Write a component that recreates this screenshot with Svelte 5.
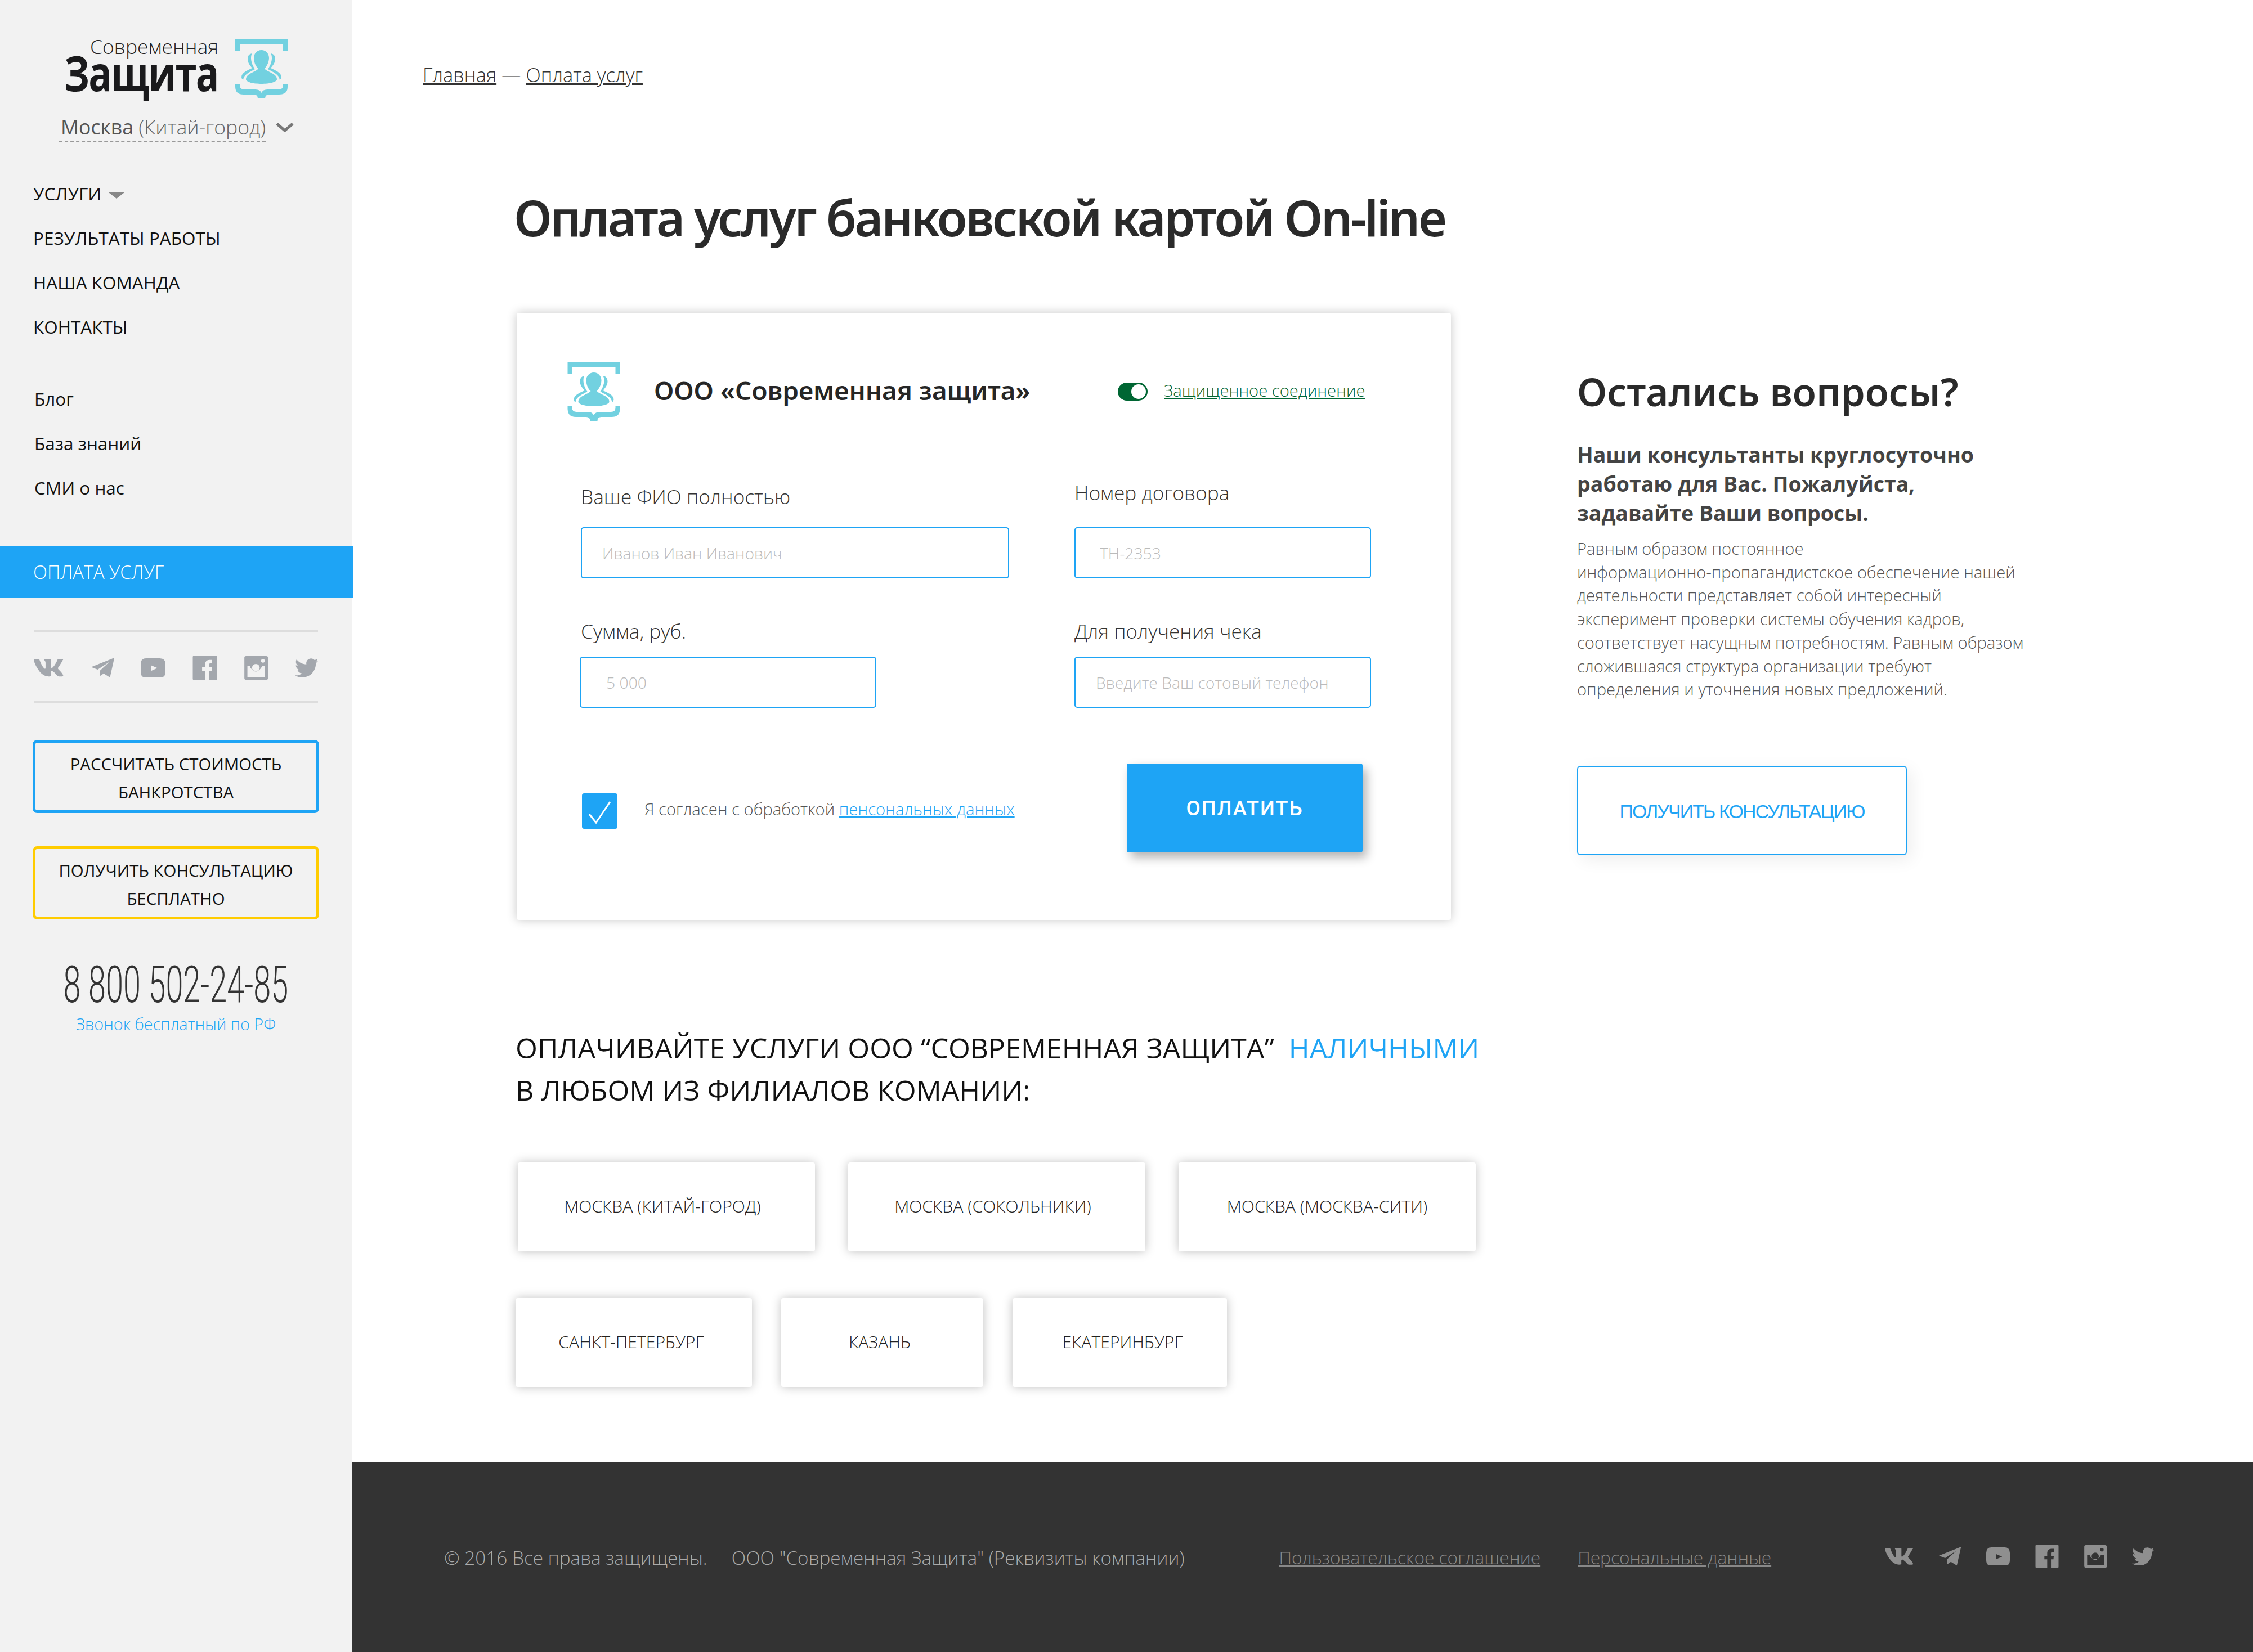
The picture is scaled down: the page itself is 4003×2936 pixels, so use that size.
<script>
    const socials = [
        { name: 'vk', box: '9 96 558 320', d: 'M545 117.7c3.7-12.5 0-21.7-17.8-21.7h-58.9c-15 0-21.9 7.9-25.6 16.7 0 0-32.1 78.9-77.5 130.1-14.7 14.8-21.4 19.5-29.4 19.5-4 0-9.8-4.7-9.8-17.2V117.7c0-15-4.5-21.7-16.9-21.7h-92.6c-9.4 0-15 7-15 13.5 0 14.2 21.2 17.5 23.4 57.4v86.8c0 19-3.4 22.5-10.9 22.5-20 0-68.6-73.4-97.4-157.4-5.8-16.3-11.5-22.9-26.6-22.9H30.1C13 96 9.7 103.9 9.7 112.7c0 15.6 20 93.1 93.1 195.5C151.5 378.1 220.1 416 282.5 416c37.5 0 42.1-8.4 42.1-22.9 0-66.8-3.4-73.1 15.4-73.1 8.7 0 23.7 4.4 58.7 38.1 40 40 46.6 57.9 69 57.9h58.9c16.8 0 25.3-8.4 20.4-25-11.2-34.9-86.9-106.7-90.3-111.5-8.7-11.2-6.2-16.2 0-26.2.1-.1 72-101.3 79.4-135.6z' },
        { name: 'tg', box: '0 0 114 100', d: 'M0 46L111 1Q114 0 114 3L93 97L62 78L42 91L44 63L90 20L32 58Z' },
        { name: 'yt', box: '0 0 122 95', d: 'M28 0H94Q122 0 122 28V67Q122 95 94 95H28Q0 95 0 67V28Q0 0 28 0ZM50 34V62L82 48Z' },
        { name: 'fb', box: '0 0 122 125', d: 'M8 0H114Q122 0 122 8V117Q122 125 114 125H82V78H95L97 60H82V46C82 42 84 40 88 40H97V22H84C72 22 62 30 62 46V60H47V78H62V125H8Q0 125 0 117V8Q0 0 8 0Z' },
        { name: 'ig', box: '0 0 117 118', d: 'M8 0H109Q117 0 117 8V110Q117 118 109 118H8Q0 118 0 110V8Q0 0 8 0ZM15 50H27A31 31 0 0 0 87 50H102V105H15ZM38 58a19 19 0 1 0 38 0a19 19 0 1 0 -38 0ZM83 24a9 9 0 1 0 18 0a9 9 0 1 0 -18 0Z' },
        { name: 'tw', box: '0 48 512 416', d: 'M459.37 151.716c.325 4.548.325 9.097.325 13.645 0 138.72-105.583 298.558-298.558 298.558-59.452 0-114.68-17.219-161.137-47.106 8.447.974 16.568 1.299 25.34 1.299 49.055 0 94.213-16.568 130.274-44.832-46.132-.975-84.792-31.188-98.112-72.772 6.498.974 12.995 1.624 19.818 1.624 9.421 0 18.843-1.3 27.614-3.573-48.081-9.747-84.143-51.98-84.143-102.985v-1.299c13.969 7.797 30.214 12.67 47.431 13.319-28.264-18.843-46.781-51.005-46.781-87.391 0-19.492 5.197-37.36 14.294-52.954 51.655 63.675 129.3 105.258 216.365 109.807-1.624-7.797-2.599-15.918-2.599-24.04 0-57.828 46.782-104.934 104.934-104.934 30.213 0 57.502 12.67 76.67 33.137 23.715-4.548 46.456-13.32 66.599-25.34-7.798 24.366-24.366 44.833-46.132 57.827 21.117-2.273 41.584-8.122 60.426-16.243-14.292 20.791-32.161 39.308-52.628 54.253z' }
    ];

    const mainNav = ['Результаты работы', 'Наша команда', 'Контакты'];
    const subNav = ['Блог', 'База знаний', 'СМИ о нас'];
    const branchRows = [
        [
            { name: 'Москва (Китай-город)', cls: 'b1 left' },
            { name: 'Москва (Сокольники)', cls: 'b1 left' },
            { name: 'Москва (Москва-Сити)', cls: 'b1' }
        ],
        [
            { name: 'Санкт-Петербург', cls: 'b2 left-s' },
            { name: 'Казань', cls: 'b3 left-s' },
            { name: 'Екатеринбург', cls: 'b4 right-s' }
        ]
    ];
</script>

{#snippet logoMark(cls)}
    <svg class={cls} viewBox="0 0 93 105">
        <path d="M0 0H93V21H85V9H8V21H0Z" />
        <path d="M0 79H8V82Q8 89 16 89H36Q44 89 46.5 95Q49 89 57 89H77Q85 89 85 82V79H93V84Q93 98 78 98H60Q53 98 53 105H40Q40 98 33 98H15Q0 98 0 84Z" />
        <path d="M46.5 19C55 19 60 26 60 33C60 42 54 50 52 52C56 58 74 60 74 71C74 76 60 79 46.5 79C33 79 19 76 19 71C19 60 37 58 41 52C38 50 33 42 33 33C33 26 38 19 46.5 19Z" />
        <path d="M30 25C24 26 22 30 22 35C22 42 27 47 30 51C22 55 11 59 11 67Q11 70 14 72C15 62 26 58 35 53C31 47 28 40 28 33Q28 28 30 25Z" />
        <path transform="translate(93 0) scale(-1 1)" d="M30 25C24 26 22 30 22 35C22 42 27 47 30 51C22 55 11 59 11 67Q11 70 14 72C15 62 26 58 35 53C31 47 28 40 28 33Q28 28 30 25Z" />
    </svg>
{/snippet}

{#snippet socialIcons()}
    {#each socials as s}
        <svg class="soc {s.name}" viewBox={s.box}><path d={s.d} fill-rule="evenodd" /></svg>
    {/each}
{/snippet}

<div class="page">
    <aside class="sidebar">
        <div class="brand">
            <div class="brand-text">
                <div class="brand-small">Современная</div>
                <div class="brand-big"><span>Защита</span></div>
            </div>
            {@render logoMark('brand-mark')}
        </div>
        <div class="city">
            <span class="city-name"><b>Москва</b> (Китай-город)</span>
            <svg class="chev" viewBox="0 0 32 18"><path d="M2 3L16 15L30 3" /></svg>
        </div>

        <ul class="nav">
            <li>Услуги <i class="caret"></i></li>
            {#each mainNav as item}
                <li>{item}</li>
            {/each}
        </ul>
        <ul class="subnav">
            {#each subNav as item}
                <li>{item}</li>
            {/each}
        </ul>

        <div class="pay-link">Оплата услуг</div>

        <div class="side-socials">{@render socialIcons()}</div>

        <div class="side-btn blue">Рассчитать стоимость<br />банкротства</div>
        <div class="side-btn yellow">Получить консультацию<br />бесплатно</div>

        <div class="phone"><span>8 800 502-24-85</span></div>
        <div class="phone-note">Звонок бесплатный по РФ</div>
    </aside>

    <main class="content">
        <div class="crumbs"><a href="#top">Главная</a> — <a href="#top">Оплата услуг</a></div>
        <h1>Оплата услуг банковской картой On-line</h1>

        <div class="columns">
            <section class="card">
                <header class="card-head">
                    {@render logoMark('card-mark')}
                    <div class="company">ООО «Современная защита»</div>
                    <i class="toggle"></i>
                    <a class="secure" href="#top">Защищенное соединение</a>
                </header>

                <div class="fields">
                    <div class="field first">
                        <div class="label">Ваше ФИО полностью</div>
                        <input class="wide" placeholder="Иванов Иван Иванович" />
                    </div>
                    <div class="field first">
                        <div class="label raised">Номер договора</div>
                        <input class="ph-contract" placeholder="ТН-2353" />
                    </div>
                    <div class="field second">
                        <div class="label">Сумма, руб.</div>
                        <input class="sum" placeholder="5 000" />
                    </div>
                    <div class="field second">
                        <div class="label">Для получения чека</div>
                        <input placeholder="Введите Ваш сотовый телефон" />
                    </div>
                </div>

                <div class="card-foot">
                    <span class="check">
                        <svg viewBox="0 0 63 63"><polyline points="13,37 25,52 50,15" /></svg>
                    </span>
                    <span class="agree">Я согласен с обработкой <a href="#top">пенсональных данных</a></span>
                    <button class="pay">Оплатить</button>
                </div>
            </section>

            <section class="questions">
                <h2>Остались вопросы?</h2>
                <p class="lead">Наши консультанты круглосуточно работаю для Вас. Пожалуйста, задавайте Ваши вопросы.</p>
                <p class="body">Равным образом постоянное<br />информационно-пропагандистское обеспечение нашей деятельности представляет собой интересный эксперимент проверки системы обучения кадров, соответствует насущным потребностям. Равным образом сложившаяся структура организации требуют определения и уточнения новых предложений.</p>
                <button class="consult">Получить консультацию</button>
            </section>
        </div>

        <h3 class="cash">Оплачивайте услуги ООО “Современная защита”&nbsp; <em>наличными</em><br />в любом из филиалов комании:</h3>

        {#each branchRows as row, i}
            <div class="branches" class:second-row={i === 1}>
                {#each row as b}
                    <div class="branch {b.cls}">{b.name}</div>
                {/each}
            </div>
        {/each}

        <footer class="footer">
            <span class="copy">© 2016 Все права защищены.</span>
            <span class="copy org">ООО "Современная Защита" (Реквизиты компании)</span>
            <a class="f-link agreement" href="#top">Пользовательское соглашение</a>
            <a class="f-link personal" href="#top">Персональные данные</a>
            <div class="foot-socials">{@render socialIcons()}</div>
        </footer>
    </main>
</div>

<style>
    :global(body) {
        margin: 0;
        background: #fff;
    }

    .page {
        display: flex;
        width: 4003px;
        height: 2936px;
        overflow: hidden;
        font-family: 'Open Sans', sans-serif;
        color: #222;
    }

    /* sidebar */
    .sidebar {
        width: 625px;
        flex: none;
        background: #f2f2f2;
    }

    .brand {
        display: flex;
        align-items: flex-start;
        padding: 70px 0 0 114px;
        gap: 30px;
    }

    .brand-text {
        width: 274px;
        text-align: right;
    }

    .brand-small {
        font-weight: 300;
        font-size: 35.5px;
        line-height: 30px;
        margin-top: -3px;
        color: #222;
    }

    .brand-big {
        display: flex;
        justify-content: flex-end;
        font-weight: 700;
        font-size: 86px;
        line-height: 63px;
        letter-spacing: -2px;
        color: #1a1a1c;
        white-space: nowrap;
    }

    .brand-big span {
        flex: none;
        transform: scaleX(0.8);
        transform-origin: right center;
    }

    :global(.brand-mark) {
        width: 93px;
        height: 105px;
        fill: #72d1e0;
        flex: none;
    }

    .city {
        display: flex;
        align-items: center;
        margin: 24px 0 0 105px;
    }

    .city-name {
        padding-left: 3px;
        font-weight: 300;
        font-size: 35.6px;
        line-height: 52px;
        color: #666;
        border-bottom: 2px dashed #999;
    }

    .city-name b {
        font-weight: 400;
        color: #555;
    }

    .chev {
        width: 32px;
        height: 18px;
        margin-left: 18px;
        fill: none;
        stroke: #777;
        stroke-width: 5;
    }

    .nav,
    .subnav {
        list-style: none;
        margin: 0;
        color: #111;
    }

    .nav {
        padding: 0 0 0 59px;
        margin-top: 51px;
        font-size: 31.5px;
        line-height: 79px;
        text-transform: uppercase;
    }

    .caret {
        display: inline-block;
        margin-left: 5px;
        vertical-align: middle;
        border-top: 11px solid #888;
        border-left: 14px solid transparent;
        border-right: 14px solid transparent;
    }

    .subnav {
        padding: 0 0 0 61px;
        margin-top: 49px;
        font-size: 31.5px;
        line-height: 79px;
    }

    .pay-link {
        width: 568px;
        margin-top: 65px;
        padding-left: 59px;
        background: #1ea4f5;
        color: #fff;
        font-weight: 300;
        font-size: 32.6px;
        line-height: 92px;
        text-transform: uppercase;
    }

    .side-socials {
        display: flex;
        justify-content: space-between;
        align-items: center;
        width: 505px;
        height: 118px;
        padding-top: 5px;
        margin: 57px 0 0 60px;
        border-top: 3px solid #ddd;
        border-bottom: 3px solid #ddd;
        font-size: 44px;
        fill: #a3a7ad;
    }

    .soc {
        display: block;
        flex: none;
    }

    .soc.vk { width: 1.23em; height: 0.71em; }
    .soc.tg { width: 0.93em; height: 0.82em; }
    .soc.yt { width: 1em; height: 0.78em; }
    .soc.fb { width: 1em; height: 1em; }
    .soc.ig { width: 0.96em; height: 0.96em; }
    .soc.tw { width: 0.94em; height: 0.78em; }

    .side-btn {
        width: 499px;
        margin: 0 0 0 58px;
        border: 5px solid;
        border-radius: 8px;
        font-size: 29.4px;
        line-height: 50px;
        text-align: center;
        padding: 13px 0 7px;
        text-transform: uppercase;
        color: #111;
    }

    .side-btn.blue {
        margin-top: 66px;
        border-color: #1ea4f5;
    }

    .side-btn.yellow {
        margin-top: 59px;
        border-color: #ffcc00;
    }

    .phone {
        display: flex;
        justify-content: center;
        margin-top: 65px;
        font-family: Roboto, sans-serif;
        font-weight: 300;
        font-size: 90px;
        line-height: 104px;
        color: #333;
        white-space: nowrap;
    }

    .phone span {
        flex: none;
        transform: scaleX(0.62);
    }

    .phone-note {
        margin-top: -3px;
        text-align: center;
        font-weight: 300;
        font-size: 28.8px;
        line-height: 40px;
        color: #1ea4f5;
    }

    /* main column */
    .content {
        flex: 1;
        display: flex;
        flex-direction: column;
        min-width: 0;
    }

    .crumbs {
        margin: 108px 0 0 126px;
        font-size: 34.4px;
        font-weight: 300;
        line-height: 50px;
        color: #333;
    }

    .crumbs a {
        color: #333;
    }

    h1 {
        margin: 173px 0 0 288px;
        font-family: 'Noto Sans', sans-serif;
        font-weight: 600;
        font-size: 88px;
        letter-spacing: -3.5px;
        line-height: 110px;
        color: #2a2a2a;
    }

    .columns {
        display: flex;
        align-items: flex-start;
        margin: 115px 0 0 293px;
    }

    .card {
        width: 1660px;
        height: 1079px;
        flex: none;
        background: #fff;
        border-radius: 4px;
        box-shadow: 0 0 18px rgba(0, 0, 0, 0.22);
    }

    .card-head {
        display: flex;
        align-items: center;
        padding: 87px 0 0 90px;
    }

    :global(.card-mark) {
        width: 94px;
        height: 105px;
        fill: #72d1e0;
        flex: none;
    }

    .company {
        width: 824px;
        margin: -5px 0 0 60px;
        font-family: 'Noto Sans', sans-serif;
        font-weight: 600;
        font-size: 45.8px;
        color: #262626;
    }

    .toggle {
        position: relative;
        width: 53px;
        height: 32px;
        border-radius: 16px;
        background: #006633;
    }

    .toggle::after {
        content: '';
        position: absolute;
        right: 3px;
        top: 3px;
        width: 26px;
        height: 26px;
        border-radius: 50%;
        background: #fff;
    }

    .secure {
        margin: -4px 0 0 29px;
        font-weight: 300;
        font-size: 29.2px;
        color: #006633;
    }

    .fields {
        display: grid;
        grid-template-columns: 877px 527px;
        margin: 104px 0 0 114px;
    }

    .field {
        display: flex;
        flex-direction: column;
        align-items: flex-start;
    }

    .field.second {
        margin-top: 63px;
    }

    .label {
        font-weight: 300;
        font-size: 35.3px;
        line-height: 60px;
        color: #333;
    }

    .label.raised {
        position: relative;
        top: -7px;
    }

    .field.first .label {
        margin-bottom: 25px;
    }

    .field.second .label {
        margin-bottom: 16px;
    }

    input {
        box-sizing: border-box;
        width: 527px;
        height: 91px;
        padding: 0 36px;
        border: 2px solid #1ea4f5;
        border-radius: 5px;
        outline: none;
        font-family: 'Open Sans', sans-serif;
        font-weight: 300;
        font-size: 28.3px;
        background: #fff;
    }

    input::placeholder {
        color: #bbb;
        opacity: 1;
    }

    input.wide {
        width: 761px;
    }

    input.sum {
        margin-left: -2px;
        padding-left: 45px;
    }

    input.ph-contract {
        padding-left: 43px;
    }

    .card-foot {
        display: flex;
        align-items: center;
        margin-top: 99px;
        padding-left: 116px;
    }

    .check {
        width: 63px;
        height: 63px;
        margin-top: 11px;
        border-radius: 4px;
        background: #1ea4f5;
    }

    .check svg {
        display: block;
        fill: none;
        stroke: #fff;
        stroke-width: 3;
    }

    .agree {
        margin: 3px 0 0 48px;
        font-weight: 300;
        font-size: 29.2px;
        color: #555;
    }

    .agree a {
        color: #1ea4f5;
    }

    .pay {
        width: 419px;
        height: 158px;
        margin: 0 157px 0 auto;
        border: none;
        border-radius: 4px;
        background: #1ea4f5;
        box-shadow: 7px 9px 18px rgba(0, 0, 0, 0.3);
        color: #fff;
        font-family: Roboto, sans-serif;
        font-weight: 500;
        font-size: 36.5px;
        letter-spacing: 2px;
        text-transform: uppercase;
    }

    .questions {
        width: 800px;
        margin-left: 224px;
        padding-top: 89px;
    }

    h2 {
        margin: 0;
        font-family: 'Noto Sans', sans-serif;
        font-weight: 600;
        font-size: 69px;
        line-height: 100px;
        color: #2a2a2a;
    }

    .lead {
        width: 740px;
        margin: 37px 0 0;
        font-weight: 700;
        font-size: 37.5px;
        line-height: 52px;
        color: #444;
    }

    .body {
        width: 800px;
        margin: 17px 0 0;
        font-weight: 300;
        font-size: 29.2px;
        line-height: 41.7px;
        color: #555;
    }

    .consult {
        display: block;
        width: 586px;
        height: 159px;
        margin-top: 114px;
        padding-top: 6px;
        border: 2px solid #1ea4f5;
        border-radius: 6px;
        background: #fff;
        box-shadow: 8px 8px 30px rgba(0, 0, 0, 0.07);
        color: #1ea4f5;
        font-family: 'Liberation Sans', sans-serif;
        font-size: 33.8px;
        letter-spacing: -1.8px;
        text-transform: uppercase;
    }

    .cash {
        margin: 190px 0 0 291px;
        font-weight: 400;
        font-size: 50px;
        line-height: 75px;
        color: #111;
        text-transform: uppercase;
    }

    .cash em {
        font-style: normal;
        color: #1ea4f5;
    }

    .branches {
        display: flex;
        gap: 59px;
        margin: 91px 0 0 295px;
    }

    .branches.second-row {
        gap: 52px;
        margin: 83px 0 0 291px;
    }

    .branch {
        box-sizing: border-box;
        height: 158px;
        border-radius: 4px;
        background: #fff;
        box-shadow: 0 0 18px rgba(0, 0, 0, 0.25);
        font-weight: 300;
        font-size: 30.2px;
        line-height: 156px;
        text-align: center;
        text-transform: uppercase;
        color: #222;
    }

    .b1 { width: 528px; }
    .b2 { width: 420px; }
    .b3 { width: 359px; }
    .b4 { width: 381px; }
    .left { padding-right: 14px; }
    .left-s { padding-right: 9px; }
    .right-s { padding-left: 10px; }

    .footer {
        display: flex;
        align-items: center;
        height: 337px;
        margin-top: auto;
        padding-left: 164px;
        background: #333;
        font-weight: 300;
        font-size: 33.3px;
    }

    .copy {
        color: #aaa;
        white-space: nowrap;
    }

    .copy.org {
        margin-left: 43px;
    }

    .f-link {
        color: #888;
        font-size: 31.6px;
        white-space: nowrap;
    }

    .f-link.agreement {
        margin-left: 168px;
    }

    .f-link.personal {
        margin-left: 66px;
    }

    .foot-socials {
        display: flex;
        justify-content: space-between;
        align-items: center;
        width: 478px;
        margin: -3px 0 0 202px;
        font-size: 42px;
        fill: #8f8f8f;
    }
</style>
